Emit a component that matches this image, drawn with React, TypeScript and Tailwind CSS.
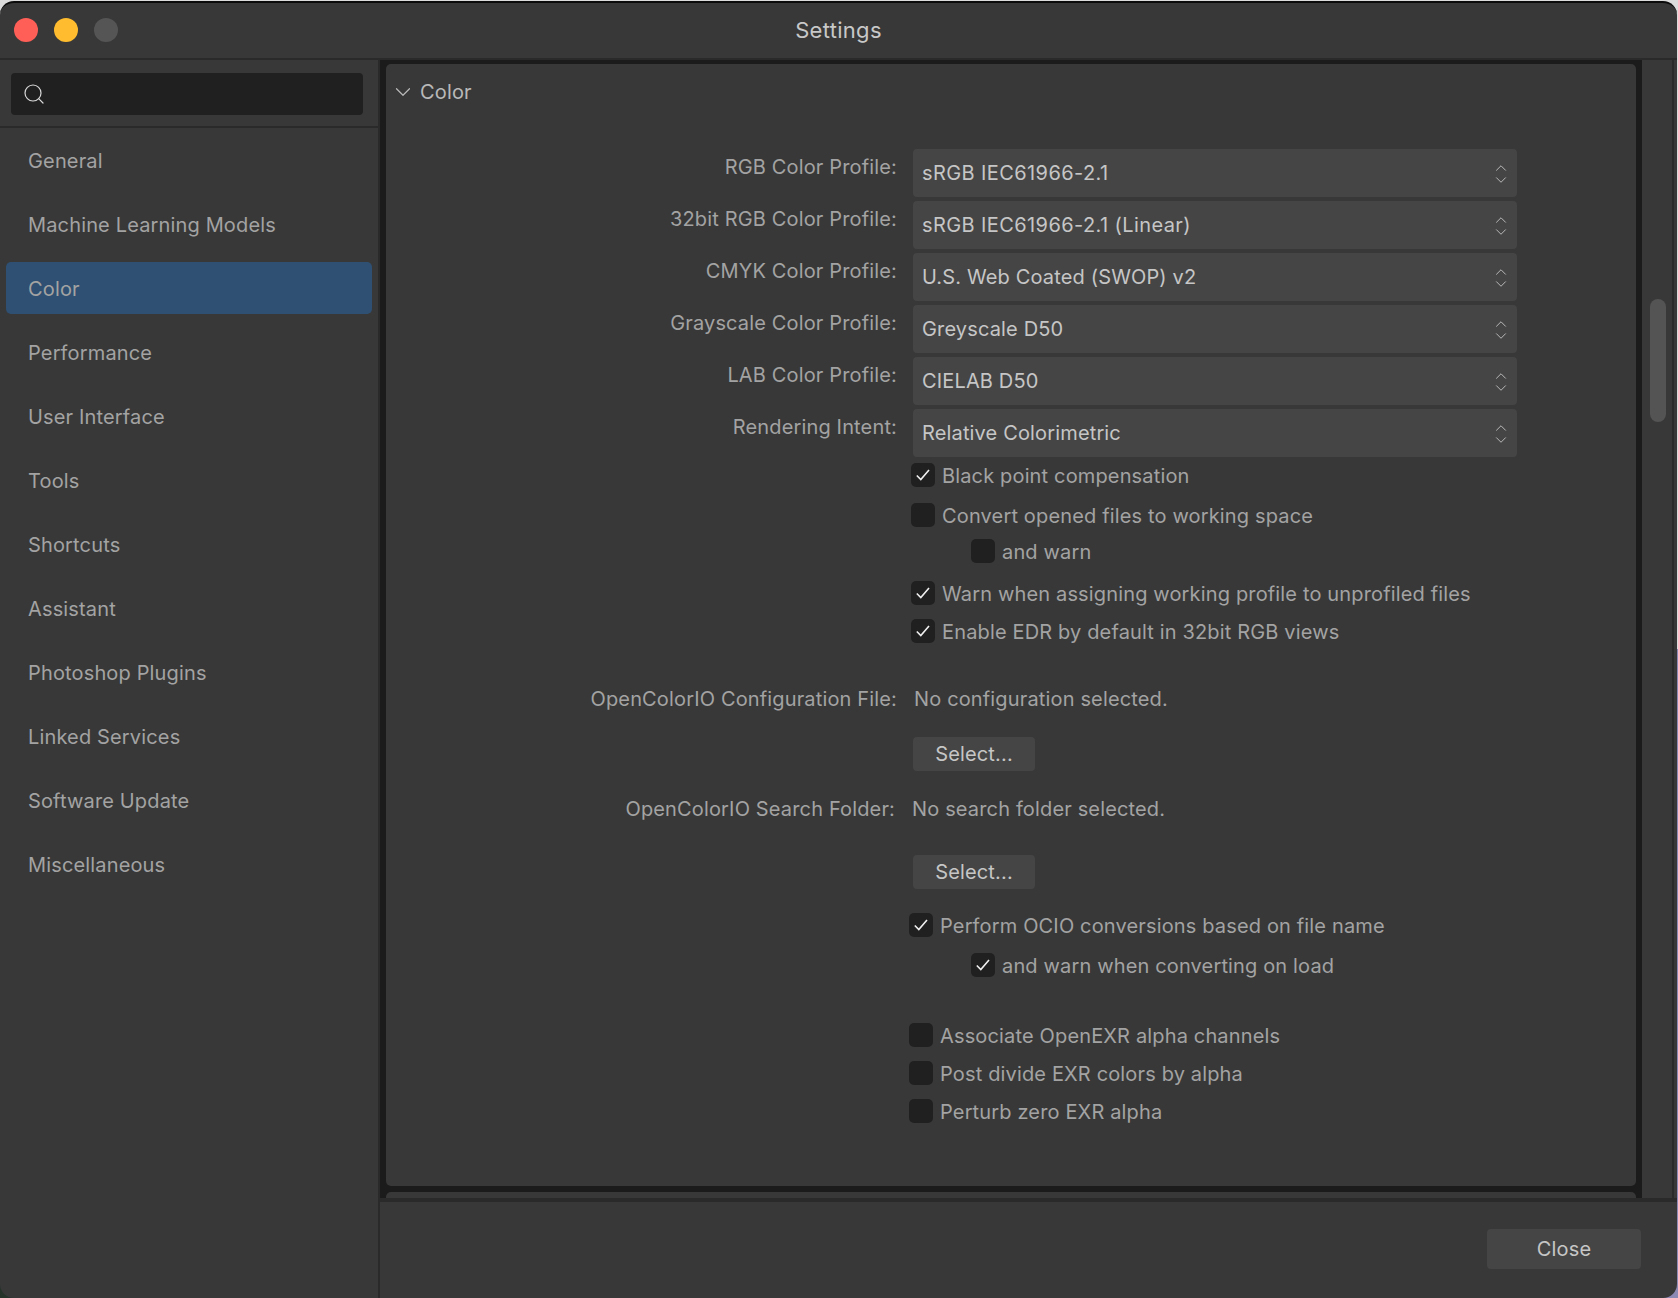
import { ChevronDown, ChevronUp, Search } from 'lucide-react';

const sidebarItems = [
  'General',
  'Machine Learning Models',
  'Color',
  'Performance',
  'User Interface',
  'Tools',
  'Shortcuts',
  'Assistant',
  'Photoshop Plugins',
  'Linked Services',
  'Software Update',
  'Miscellaneous',
];

const profiles = [
  ['RGB Color Profile:', 'sRGB IEC61966-2.1'],
  ['32bit RGB Color Profile:', 'sRGB IEC61966-2.1 (Linear)'],
  ['CMYK Color Profile:', 'U.S. Web Coated (SWOP) v2'],
  ['Grayscale Color Profile:', 'Greyscale D50'],
  ['LAB Color Profile:', 'CIELAB D50'],
  ['Rendering Intent:', 'Relative Colorimetric'],
];

function Check({ label, checked, className }: { label: string; checked?: boolean; className: string }) {
  return (
    <div className={`flex h-6 items-center gap-[7px] ${className}`}>
      <span className="flex h-6 w-6 items-center justify-center rounded-[5px] bg-[#202020]">
        {checked && (
          <svg width="14" height="12" viewBox="0 0 14 12" fill="none" stroke="#f0f0f0" strokeWidth="1.6">
            <path d="M0.8 6.5 L4.8 10.5 L13 1" />
          </svg>
        )}
      </span>
      <span className="pt-px">{label}</span>
    </div>
  );
}

function SelectButton({ className }: { className: string }) {
  return (
    <button className={`ml-[527px] flex h-[34px] w-[122px] items-center justify-center rounded-[4px] bg-[#454545] text-[#c6c6c6] ${className}`}>
      Select...
    </button>
  );
}

export default function App() {
  return (
    <div className="h-[1298px] w-[1678px] overflow-hidden bg-[linear-gradient(180deg,#dcdcdc_0%,#dcdcdc_50%,transparent_50%),linear-gradient(90deg,#26332a_50%,#8d89b5_50%)] pt-px pr-px font-['Inter',sans-serif] text-[20px] leading-6 tracking-[0.15px] text-[#a3a3a3]">
      <div className="flex h-[1297px] flex-col overflow-hidden rounded-[14px] border-t-2 border-[#0c0c0c] bg-[#383838]">
        {/* Title bar */}
        <div className="relative flex h-[57px] shrink-0 items-center justify-center border-b-2 border-[#2a2a2a] pb-[2px] text-[22px] tracking-[0.3px] text-[#c8c8c8]">
          <div className="absolute left-[14px] top-[15px] flex gap-4">
            <span className="h-6 w-6 rounded-full bg-[#ff5f57]" />
            <span className="h-6 w-6 rounded-full bg-[#febc2e]" />
            <span className="h-6 w-6 rounded-full bg-[#555555]" />
          </div>
          Settings
        </div>

        <div className="flex min-h-0 flex-1">
          {/* Sidebar */}
          <div className="w-[380px] shrink-0 border-r-2 border-[#2a2a2a]">
            <div className="h-[68px] border-b-2 border-[#2a2a2a] px-[11px] pt-[13px]">
              <div className="flex h-[42px] w-[352px] items-center rounded-[4px] bg-[#202020] pl-[11px]">
                <Search size={24} strokeWidth={1.2} className="text-[#d8d8d8]" />
              </div>
            </div>
            <div className="flex flex-col gap-3 px-[6px] pt-[6px]">
              {sidebarItems.map((item) => (
                <div
                  key={item}
                  className={`flex h-[52px] w-[366px] items-center rounded-[5px] pt-[2px] pl-[22px] ${item === 'Color' ? 'bg-[#2f5072]' : ''}`}
                >
                  {item}
                </div>
              ))}
            </div>
          </div>

          {/* Content */}
          <div className="flex min-w-0 flex-1 flex-col">
            <div className="flex min-h-0 flex-1">
              <div className="flex w-[1262px] shrink-0 flex-col gap-[6px] overflow-hidden bg-[#1b1b1b] px-[6px] pt-1">
                <div className="h-[1122px] shrink-0 rounded-[5px] bg-[#383838]">
                  <div className="flex items-center pt-[15px] pl-[4px] text-[#b9b9b9]">
                    <ChevronDown size={26} strokeWidth={1.1} />
                    <span className="ml-[4px]">Color</span>
                  </div>

                  <div className="mt-[44px] flex flex-col gap-1">
                    {profiles.map(([label, value]) => (
                      <div key={label} className="flex h-12 gap-4">
                        <div className="w-[511px] pt-[6px] text-right">{label}</div>
                        <div className="flex w-[604px] items-center justify-between rounded-[4px] bg-[#454545] pr-[7px] pl-[9px] text-[#c6c6c6]">
                          <span className={value.startsWith('sRGB') ? 'tracking-[0.4px]' : ''}>{value}</span>
                          <span className="flex translate-y-px flex-col text-[#bbbbbb]">
                            <ChevronUp size={18} strokeWidth={1.3} />
                            <ChevronDown size={18} strokeWidth={1.3} className="-mt-[6px]" />
                          </span>
                        </div>
                      </div>
                    ))}
                  </div>

                  <Check label="Black point compensation" checked className="mt-[6px] ml-[525px]" />
                  <Check label="Convert opened files to working space" className="mt-4 ml-[525px]" />
                  <Check label="and warn" className="mt-3 ml-[585px]" />
                  <Check label="Warn when assigning working profile to unprofiled files" checked className="mt-[18px] ml-[525px]" />
                  <Check label="Enable EDR by default in 32bit RGB views" checked className="mt-[14px] ml-[525px]" />

                  <div className="mt-[44px] flex gap-4">
                    <div className="w-[511px] text-right">OpenColorIO Configuration File:</div>
                    <div className="ml-[1px]">No configuration selected.</div>
                  </div>
                  <SelectButton className="mt-[26px]" />

                  <div className="mt-[26px] flex gap-4">
                    <div className="w-[509px] text-right">OpenColorIO Search Folder:</div>
                    <div className="ml-[1px]">No search folder selected.</div>
                  </div>
                  <SelectButton className="mt-[34px]" />

                  <Check label="Perform OCIO conversions based on file name" checked className="mt-6 ml-[523px]" />
                  <Check label="and warn when converting on load" checked className="mt-4 ml-[585px]" />
                  <Check label="Associate OpenEXR alpha channels" className="mt-[46px] ml-[523px]" />
                  <Check label="Post divide EXR colors by alpha" className="mt-[14px] ml-[523px]" />
                  <Check label="Perturb zero EXR alpha" className="mt-[14px] ml-[523px]" />
                </div>
                <div className="h-4 shrink-0 rounded-[5px] bg-[#383838]" />
              </div>

              {/* Scrollbar */}
              <div className="w-[32px] border-r-2 border-[#2a2a2a] pt-[239px] pl-2">
                <div className="h-[123px] w-4 rounded-lg bg-[#545454]" />
              </div>
            </div>

            {/* Footer */}
            <div className="flex h-[100px] shrink-0 justify-end border-t-4 border-[#2a2a2a] pt-[27px] pr-[36px]">
              <button className="flex h-10 w-[154px] items-center justify-center rounded-[4px] bg-[#454545] text-[#c6c6c6]">
                Close
              </button>
            </div>
          </div>
        </div>
      </div>
    </div>
  );
}
